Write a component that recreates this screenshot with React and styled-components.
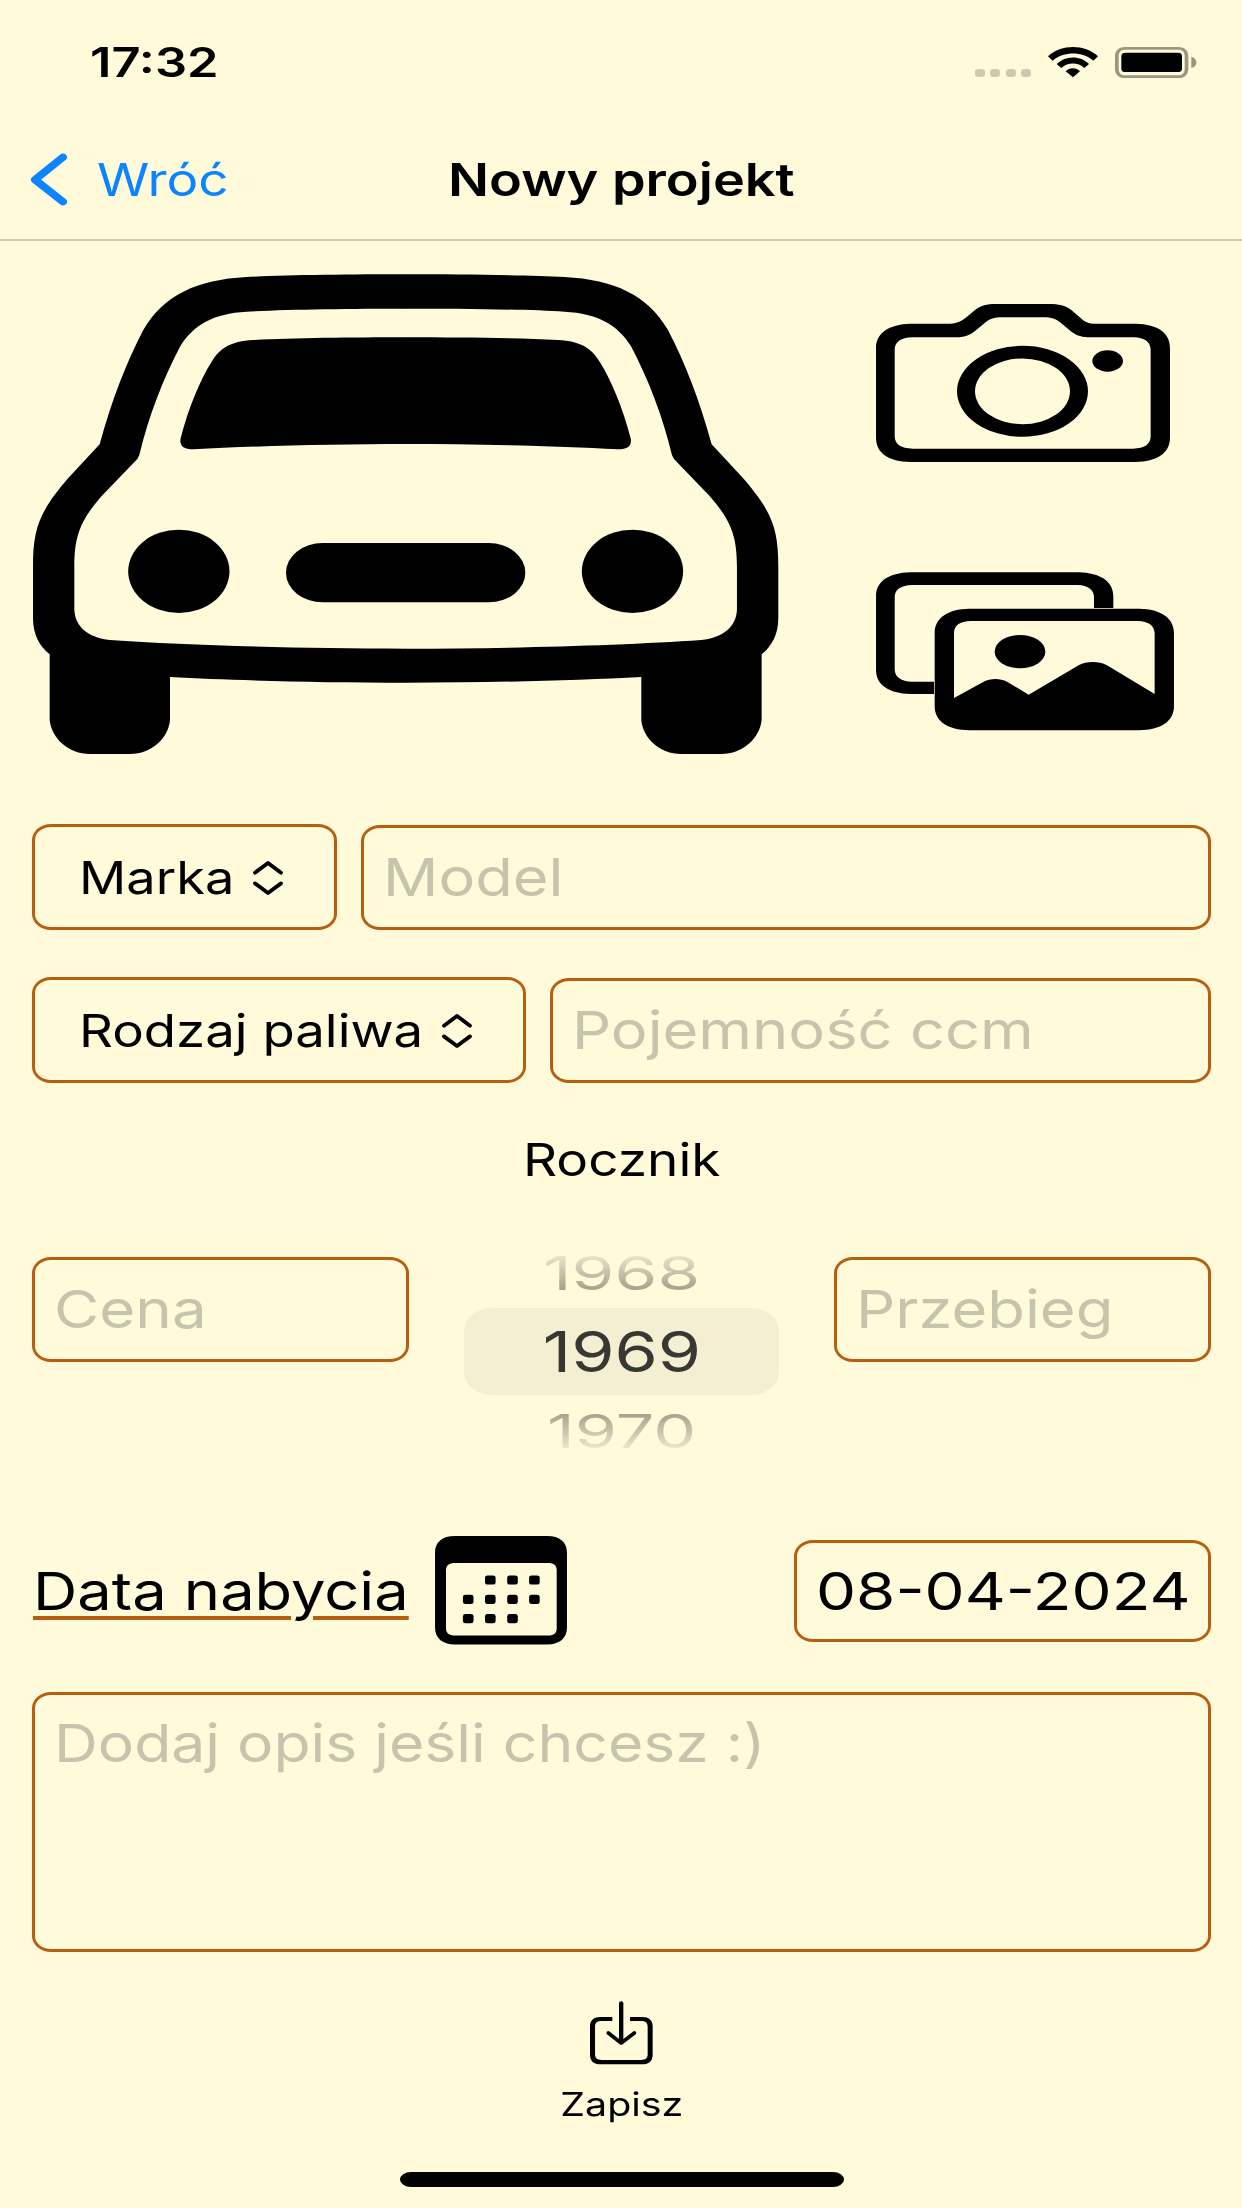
import React from "react";
import styled, { createGlobalStyle } from "styled-components";

const color = {
  paper: "#fffada",
  ink: "#000000",
  blue: "#0a84ff",
  rust: "#b85e10",
  hint: "#c7c4ae",
};

const GlobalStyle = createGlobalStyle`
  *, *::before, *::after { box-sizing: border-box; }
  body { margin: 0; background: ${color.paper}; }
`;

const Screen = styled.div`
  width: 1242px;
  height: 2208px;
  overflow: hidden;
  display: flex;
  flex-direction: column;
  background: ${color.paper};
  color: ${color.ink};
  font-family: Inter, "Liberation Sans", sans-serif;
`;

/* Wide text: the typeface is stretched horizontally by $stretch. */
const Label = styled.span`
  display: block;
  flex: none;
  white-space: nowrap;
  line-height: 60px;
  font-size: ${(p) => p.$size || 45}px;
  font-weight: ${(p) => p.$weight || 400};
  color: ${(p) => p.$color || "inherit"};
  transform: scaleX(${(p) => p.$stretch});
  transform-origin: ${(p) => (p.$centered ? "center" : "left")} center;
`;

const StatusBar = styled.header`
  height: 125px;
  flex: none;
  display: flex;
  align-items: center;
  justify-content: space-between;
  padding: 0 45px 0 90px;
`;

const StatusIcons = styled.div`
  display: flex;
  align-items: center;
`;

const SignalDots = styled.div`
  display: flex;
  gap: 5.5px;
  margin: 20px 17px 0 0;
`;

const SignalDot = styled.i`
  width: 10px;
  height: 8px;
  border-radius: 3.5px / 3px;
  background: #cec9b0;
`;

const NavBar = styled.nav`
  height: 116px;
  flex: none;
  display: grid;
  grid-template-columns: 1fr auto 1fr;
  align-items: center;
  padding: 0 29px 5px 30px;
  border-bottom: 2px solid #cdc9b3;
`;

const BackButton = styled.div`
  display: flex;
  align-items: center;
  gap: 29px;
  color: ${color.blue};
`;

const Main = styled.main`
  flex: 1;
  display: flex;
  flex-direction: column;
  padding: 33px 31px 0 32px;
`;

const Hero = styled.section`
  display: flex;
  height: 481px;
  margin-bottom: 69px;
  padding-left: 1px;
`;

const PhotoButtons = styled.div`
  display: flex;
  flex-direction: column;
  justify-content: space-between;
  margin-left: 97.4px;
  padding: 30.4px 0 24.3px;
`;

const Row = styled.div`
  display: flex;
  align-items: ${(p) => p.$align || "center"};
  height: ${(p) => p.$height}px;
  margin-bottom: ${(p) => p.$after}px;
`;

const Box = styled.div`
  display: flex;
  align-items: center;
  border: 3px solid ${color.rust};
  border-radius: 19px / 16px;
`;

const Select = styled(Box)`
  width: ${(p) => p.$width}px;
  height: 106px;
  justify-content: space-between;
  padding: 1px 50px 0 43.5px;
  margin-right: 24px;
`;

const Field = styled(Box)`
  ${(p) => (p.$width ? `width: ${p.$width}px;` : "flex: 1; min-width: 0;")}
  height: ${(p) => p.$height || 105}px;
  padding-left: 18.7px;
`;

const SectionTitle = styled.div`
  display: flex;
  justify-content: center;
  align-items: center;
  height: 60px;
  margin: 47px 0 63px;
`;

const FieldSlot = styled.div`
  width: 377px;
  padding-top: 3.5px;
`;

const Wheel = styled.div`
  flex: 1;
  height: 197px;
  display: flex;
  flex-direction: column;
  align-items: center;
  justify-content: space-between;
`;

const WheelSelected = styled.div`
  width: 315px;
  height: 87px;
  display: flex;
  align-items: center;
  justify-content: center;
  border-radius: 28px / 23px;
  background: #f4efd3;
  color: #383731;
`;

const WheelNeighbour = styled.span`
  display: block;
  font-size: 56.4px;
  line-height: 47px;
  margin: -4px 0;
  color: transparent;
  background: linear-gradient(
    ${(p) => (p.$above ? "to bottom" : "to top")},
    #ebe6cb 5%,
    #a7a48f 90%
  );
  background-clip: text;
  -webkit-background-clip: text;
  transform: scale(${(p) => p.$stretch}, 0.837);
`;

const DateTitle = styled.div`
  width: 403px;
  padding-left: 0.8px;
`;

const Underlined = styled(Label)`
  width: max-content;
  text-decoration: underline;
  text-decoration-color: ${color.rust};
  text-decoration-thickness: 4px;
  text-underline-offset: 6px;
`;

const Spacer = styled.div`
  flex: 1;
`;

const Description = styled(Box)`
  height: 260px;
  align-items: flex-start;
  padding: 18px 18.7px;
`;

const SaveButton = styled.div`
  display: flex;
  flex-direction: column;
  align-items: center;
  gap: 11px;
  margin-top: 49px;
`;

const HomeIndicator = styled.div`
  width: 444px;
  height: 15px;
  margin: 37px auto 0;
  border-radius: 11px / 7.5px;
  background: ${color.ink};
`;

const Svg = styled.svg`
  display: block;
  flex: none;
  overflow: visible;
`;

const BatterySvg = styled(Svg)`
  margin-left: 17px;
`;

function WifiIcon() {
  return (
    <Svg width="50" height="30.3" viewBox="684 140 150 91" preserveAspectRatio="none">
      <path d="M684 168 C725 131 793 131 834 168 L820 181 C787 152 731 152 698 181Z" />
      <path d="M710 191 C737 165 781 165 807 191 L793 203 C774 185 744 185 724 203Z" />
      <path d="M737 213 C748 201 769 201 780 213 L759 231Z" />
    </Svg>
  );
}

function BatteryIcon() {
  return (
    <BatterySvg width="82" height="31" viewBox="884 141 246 93" preserveAspectRatio="none">
      <path
        fill="#9a9781"
        fillRule="evenodd"
        d="M914 141 H1074 C1094 141 1104 153 1104 168 V206 C1104 222 1094 234 1074 234 H914 C894 234 884 222 884 206 V168 C884 153 894 141 914 141Z M914 149 C901 149 895 157 895 168 V206 C895 218 901 226 914 226 H1074 C1087 226 1093 218 1093 206 V168 C1093 157 1087 149 1074 149Z"
      />
      <rect x="903" y="158" width="182" height="58" rx="13" ry="10" />
      <path fill="#9a9781" d="M1113 170 C1133 174 1133 200 1113 204Z" />
    </BatterySvg>
  );
}

function BackIcon() {
  return (
    <Svg width="38" height="52" viewBox="91 461.5 113 155" fill="none" stroke="currentColor">
      <g transform="scale(1.2 1)">
        <path d="M157.5 471 L88 538 L157.5 604" strokeWidth="21" strokeLinecap="round" strokeLinejoin="round" />
      </g>
    </Svg>
  );
}

const carHalf =
  "M1218 73 C1050 73 850 75 740 81 C590 89 492 135 430 240 C380 335 335 450 299 583 L205 684 C118 785 99 835 99 950 V1105 C99 1155 120 1190 149 1213 V1410 C155 1465 205 1512 270 1512 H390 C455 1512 505 1465 510 1410 V1281 C700 1291 950 1298 1218 1298 Z " +
  "M1218 176 C1050 176 850 178 740 185 C640 190 580 225 540 290 C490 385 445 500 418 615 L412 627 L305 738 C240 812 223 860 223 950 V1080 C226 1130 262 1162 330 1170 C560 1186 900 1196 1218 1196 Z";
const windowHalf =
  "M1218 262 C1050 262 880 264 760 270 C690 274 660 295 635 335 C600 390 565 475 542 565 C538 585 548 598 580 598 C760 588 1000 582 1218 582Z";

function CarHalf({ mirrored }) {
  return (
    <g transform={mirrored ? "translate(2434 0) scale(-1 1)" : undefined}>
      <path fillRule="evenodd" d={carHalf} />
      <path d={windowHalf} />
      <ellipse cx="536.5" cy="964" rx="152" ry="125" />
    </g>
  );
}

function CarIcon() {
  return (
    <Svg width="745.3" height="480.7" viewBox="99 72 2236 1442">
      <CarHalf />
      <CarHalf mirrored />
      <rect x="858" y="879" width="718" height="178" rx="110" ry="89" />
    </Svg>
  );
}

function CameraIcon() {
  return (
    <Svg width="294" height="158.3" viewBox="77 73 882 475">
      <path
        fillRule="evenodd"
        d="M180 132 H300 C322 131 337 122 350 111 L375 90 C392 77 410 73 435 73 H597 C625 73 645 77 662 90 L690 114 C703 126 715 132 735 132 H855 C925 134 959 160 959 205 V475 C959 520 920 546 855 547 H180 C115 546 77 520 77 475 V205 C77 160 115 134 180 132Z M185 173 H320 C345 172 360 165 375 153 L403 130 C418 118 432 113 455 113 H580 C602 113 617 118 632 130 L658 152 C675 166 690 172 712 173 H850 C883 174 900 187 901 208 V472 C900 494 883 506 848 507 H187 C152 506 134 494 133 472 V208 C134 187 152 174 185 173Z"
      />
      <path
        fillRule="evenodd"
        d="M320 335 a196.5 136.5 0 1 0 393 0 a196.5 136.5 0 1 0 -393 0Z M374 335 a142.5 98.5 0 1 0 285 0 a142.5 98.5 0 1 0 -285 0Z"
      />
      <ellipse cx="772" cy="244" rx="46" ry="32" />
    </Svg>
  );
}

function GalleryIcon() {
  return (
    <Svg width="298" height="158.3" viewBox="77 877 894 475">
      <path d="M180 878 H685 C750 880 789 905 789 950 V985 H731 V950 C730 930 712 917 683 916 H185 C152 917 133 930 133 952 V1170 C134 1192 152 1205 185 1206 H251 V1243 H180 C115 1242 77 1215 77 1172 V950 C77 905 115 880 180 878Z" />
      <path
        fillRule="evenodd"
        d="M357 987 H866 C932 988 971 1015 971 1060 V1280 C971 1325 932 1351 866 1352 H357 C292 1351 253 1325 253 1280 V1060 C253 1015 292 988 357 987Z M361 1024 C328 1025 311 1038 311 1060 V1255 L400 1206 C420 1195 450 1195 470 1206 L535 1245 L685 1157 C710 1144 745 1144 770 1157 L913 1243 V1060 C912 1038 895 1025 862 1024Z"
      />
      <ellipse cx="509" cy="1116" rx="76" ry="50" />
    </Svg>
  );
}

function UpDownIcon() {
  return (
    <Svg width="32" height="36" viewBox="0 0 32 36" fill="none" stroke="#000" strokeWidth="3.8" strokeLinecap="round" strokeLinejoin="round">
      <path d="M3 12.7 L16 2.9 L29 12.7 M3 23.4 L16 33 L29 23.4" />
    </Svg>
  );
}

const calendarDots = [
  [490.3, 1580], [512.5, 1580], [534.4, 1580],
  [468.2, 1599.3], [490.3, 1599.3], [512.5, 1599.3], [534.4, 1599.3],
  [468.2, 1618.6], [490.3, 1618.6], [512.5, 1618.6],
];

function CalendarIcon() {
  return (
    <Svg width="132" height="108.5" viewBox="435 1536 132 108.5">
      <path
        fillRule="evenodd"
        d="M455 1536 H547 C560 1536 567 1542 567 1553 V1627 C567 1638 560 1644.5 547 1644.5 H455 C442 1644.5 435 1638 435 1627 V1553 C435 1542 442 1536 455 1536Z M455 1563 C449 1563 446 1565.5 446 1570 V1628.5 C446 1633 449 1635.5 455 1635.5 H548 C554 1635.5 556.7 1633 556.7 1628.5 V1570 C556.7 1565.5 554 1563 548 1563Z"
      />
      {calendarDots.map(([x, y]) => (
        <rect key={`${x}-${y}`} x={x - 5.3} y={y - 4.6} width="10.6" height="9.2" rx="2.6" ry="2.2" />
      ))}
    </Svg>
  );
}

function SaveIcon() {
  return (
    <Svg width="62.7" height="63.3" viewBox="630 212 188 190">
      <path d="M697 260 H662 C641 260 630 270 630 288 V374 C630 392 641 402 662 402 H786 C807 402 818 392 818 374 V288 C818 270 807 260 786 260 H750 V272 H783 C797 272 803 277 803 290 V372 C803 384 797 389 783 389 H665 C651 389 645 384 645 372 V290 C645 277 651 272 665 272 H697Z" />
      <path d="M723.5 219 V334" fill="none" stroke="#000" strokeWidth="13" strokeLinecap="round" />
      <path d="M685 308 L723.5 338 L763 308" fill="none" stroke="#000" strokeWidth="11" strokeLinecap="round" strokeLinejoin="round" />
    </Svg>
  );
}

export default function App() {
  return (
    <Screen>
      <GlobalStyle />
      <StatusBar>
        <Label $size={40.3} $weight={600} $stretch={1.255}>17:32</Label>
        <StatusIcons>
          <SignalDots>
            <SignalDot /><SignalDot /><SignalDot /><SignalDot />
          </SignalDots>
          <WifiIcon />
          <BatteryIcon />
        </StatusIcons>
      </StatusBar>
      <NavBar>
        <BackButton>
          <BackIcon />
          <Label $size={44.7} $stretch={1.187}>Wróć</Label>
        </BackButton>
        <Label $size={44.7} $weight={600} $stretch={1.209} $centered>Nowy projekt</Label>
      </NavBar>
      <Main>
        <Hero>
          <CarIcon />
          <PhotoButtons>
            <CameraIcon />
            <GalleryIcon />
          </PhotoButtons>
        </Hero>
        <Row $height={106} $after={47}>
          <Select $width={305}>
            <Label $stretch={1.163}>Marka</Label>
            <UpDownIcon />
          </Select>
          <Field>
            <Label $size={52.7} $stretch={1.165} $color={color.hint}>Model</Label>
          </Field>
        </Row>
        <Row $height={106} $after={0}>
          <Select $width={494}>
            <Label $stretch={1.172}>Rodzaj paliwa</Label>
            <UpDownIcon />
          </Select>
          <Field>
            <Label $size={52.7} $stretch={1.165} $color={color.hint}>Pojemność ccm</Label>
          </Field>
        </Row>
        <SectionTitle>
          <Label $stretch={1.18} $centered>Rocznik</Label>
        </SectionTitle>
        <Row $height={197} $after={86} $align="flex-start">
          <FieldSlot>
            <Field $width={377}>
              <Label $size={52.7} $stretch={1.175} $color={color.hint}>Cena</Label>
            </Field>
          </FieldSlot>
          <Wheel>
            <WheelNeighbour $above $stretch={1.228}>1968</WheelNeighbour>
            <WheelSelected>
              <Label $size={56.4} $stretch={1.239} $centered>1969</Label>
            </WheelSelected>
            <WheelNeighbour $stretch={1.21}>1970</WheelNeighbour>
          </Wheel>
          <FieldSlot>
            <Field $width={377}>
              <Label $size={52.7} $stretch={1.167} $color={color.hint}>Przebieg</Label>
            </Field>
          </FieldSlot>
        </Row>
        <Row $height={109} $after={47}>
          <DateTitle>
            <Underlined $size={52.7} $stretch={1.165}>Data nabycia</Underlined>
          </DateTitle>
          <CalendarIcon />
          <Spacer />
          <Field $width={417} $height={102}>
            <Label $size={52.7} $stretch={1.206}>08-04-2024</Label>
          </Field>
        </Row>
        <Description>
          <Label $size={52.7} $stretch={1.151} $color={color.hint}>Dodaj opis jeśli chcesz :)</Label>
        </Description>
        <SaveButton>
          <SaveIcon />
          <Label $size={32.5} $stretch={1.212} $centered>Zapisz</Label>
        </SaveButton>
        <HomeIndicator />
      </Main>
    </Screen>
  );
}
